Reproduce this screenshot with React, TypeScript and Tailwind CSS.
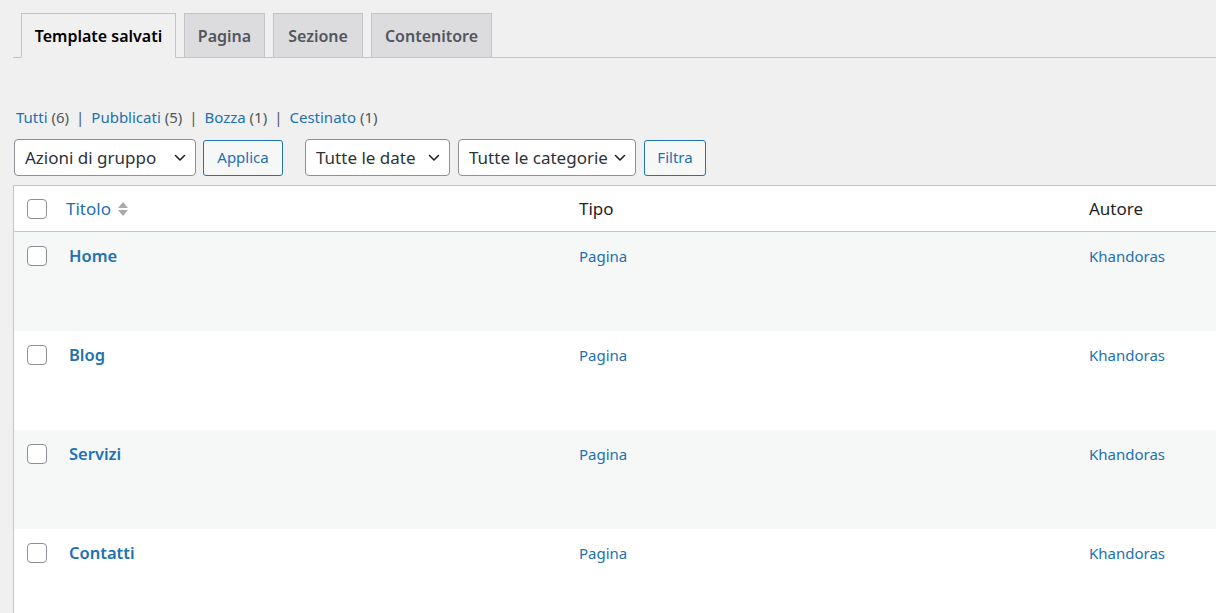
import React from "react";

const font = { fontFamily: '"Noto Sans", "Open Sans", sans-serif' };

function Chevron() {
  return (
    <svg width="14" height="14" viewBox="0 0 14 14" fill="none">
      <path d="M2.5 4.5 L7 9 L11.5 4.5" stroke="#1d2327" strokeWidth="1.6" strokeLinecap="round" strokeLinejoin="round" />
    </svg>
  );
}

function Select({ label, w }: { label: string; w: string }) {
  return (
    <div className={`${w} h-[37px] bg-white border border-[#8c8f94] rounded-[4px] flex items-center justify-between pl-[10px] pr-[8px] text-[17px] text-[#2c3338]`}>
      <span className="whitespace-nowrap">{label}</span>
      <Chevron />
    </div>
  );
}

function Btn({ label, w }: { label: string; w: string }) {
  return (
    <div className={`${w} h-[36px] bg-[#f6f7f7] border border-[#2271b1] rounded-[3px] flex items-center justify-center text-[15px] text-[#2271b1]`}>
      {label}
    </div>
  );
}

function Checkbox() {
  return <div className="w-[20px] h-[20px] bg-white border border-[#8c8f94] rounded-[4px]" />;
}

function Tab({ label, active, w }: { label: string; active?: boolean; w: string }) {
  return (
    <div
      className={`${w} h-[45px] border border-[#c3c4c7] flex items-center justify-center text-[16px] font-semibold -mb-px ${
        active ? "bg-[#f0f0f1] border-b-[#f0f0f1] text-black" : "bg-[#dcdcde] text-[#50575e]"
      }`}
    >
      {label}
    </div>
  );
}

const rows = ["Home", "Blog", "Servizi", "Contatti"];

export default function App() {
  return (
    <div className="w-[1216px] h-[613px] overflow-hidden bg-[#f0f0f1]" style={font}>
      <div className="pt-[13px] pl-[13px]">
        <div className="flex items-end gap-[8px] border-b border-[#c3c4c7] pl-[8px] h-[45px]">
          <Tab label="Template salvati" active w="w-[155px]" />
          <Tab label="Pagina" w="w-[81px]" />
          <Tab label="Sezione" w="w-[90px]" />
          <Tab label="Contenitore" w="w-[121px]" />
        </div>

        <div className="mt-[48px] pl-[3px] flex items-center text-[15px] text-[#50575e] h-[22px]">
          <span className="text-[#2271b1]">Tutti</span>
          <span>&nbsp;(6)</span>
          <span className="mx-[7px]">|</span>
          <span className="text-[#2271b1]">Pubblicati</span>
          <span>&nbsp;(5)</span>
          <span className="mx-[7px]">|</span>
          <span className="text-[#2271b1]">Bozza</span>
          <span>&nbsp;(1)</span>
          <span className="mx-[7px]">|</span>
          <span className="text-[#2271b1]">Cestinato</span>
          <span>&nbsp;(1)</span>
        </div>

        <div className="mt-[11px] flex items-center pl-[1px]">
          <Select label="Azioni di gruppo" w="w-[182px]" />
          <div className="w-[7px]" />
          <Btn label="Applica" w="w-[80px]" />
          <div className="w-[22px]" />
          <Select label="Tutte le date" w="w-[145px]" />
          <div className="w-[8px]" />
          <Select label="Tutte le categorie" w="w-[178px]" />
          <div className="w-[8px]" />
          <Btn label="Filtra" w="w-[62px]" />
        </div>

        <div className="mt-[9px] w-[1260px] border border-[#c3c4c7] bg-white">
          <div className="h-[46px] flex items-center border-b border-[#c3c4c7] text-[17px] text-[#1d2327]">
            <div className="w-[52px] pl-[13px]">
              <Checkbox />
            </div>
            <div className="w-[513px] flex items-center">
              <span className="text-[#2271b1]">Titolo</span>
              <svg width="12" height="22" viewBox="0 0 12 22" className="ml-[6px]">
                <path d="M1 10 L6 4 L11 10 Z" fill="#a7aaad" />
                <path d="M1 12 L6 18 L11 12 Z" fill="#a7aaad" />
              </svg>
            </div>
            <div className="w-[510px]">Tipo</div>
            <div>Autore</div>
          </div>
          {rows.map((r, i) => (
            <div key={r} className={`h-[99px] flex items-start pt-[13px] ${i % 2 === 0 ? "bg-[#f6f7f7]" : "bg-white"}`}>
              <div className="w-[52px] pl-[13px] pt-[1px]">
                <Checkbox />
              </div>
              <div className="w-[513px] pl-[3px] pt-[1px] text-[16.5px] font-semibold text-[#2271b1] leading-[20px]">{r}</div>
              <div className="w-[510px] pt-[1px] text-[15px] text-[#2271b1] leading-[20px]">Pagina</div>
              <div className="pt-[1px] text-[15px] text-[#2271b1] leading-[20px]">Khandoras</div>
            </div>
          ))}
        </div>
      </div>
    </div>
  );
}
